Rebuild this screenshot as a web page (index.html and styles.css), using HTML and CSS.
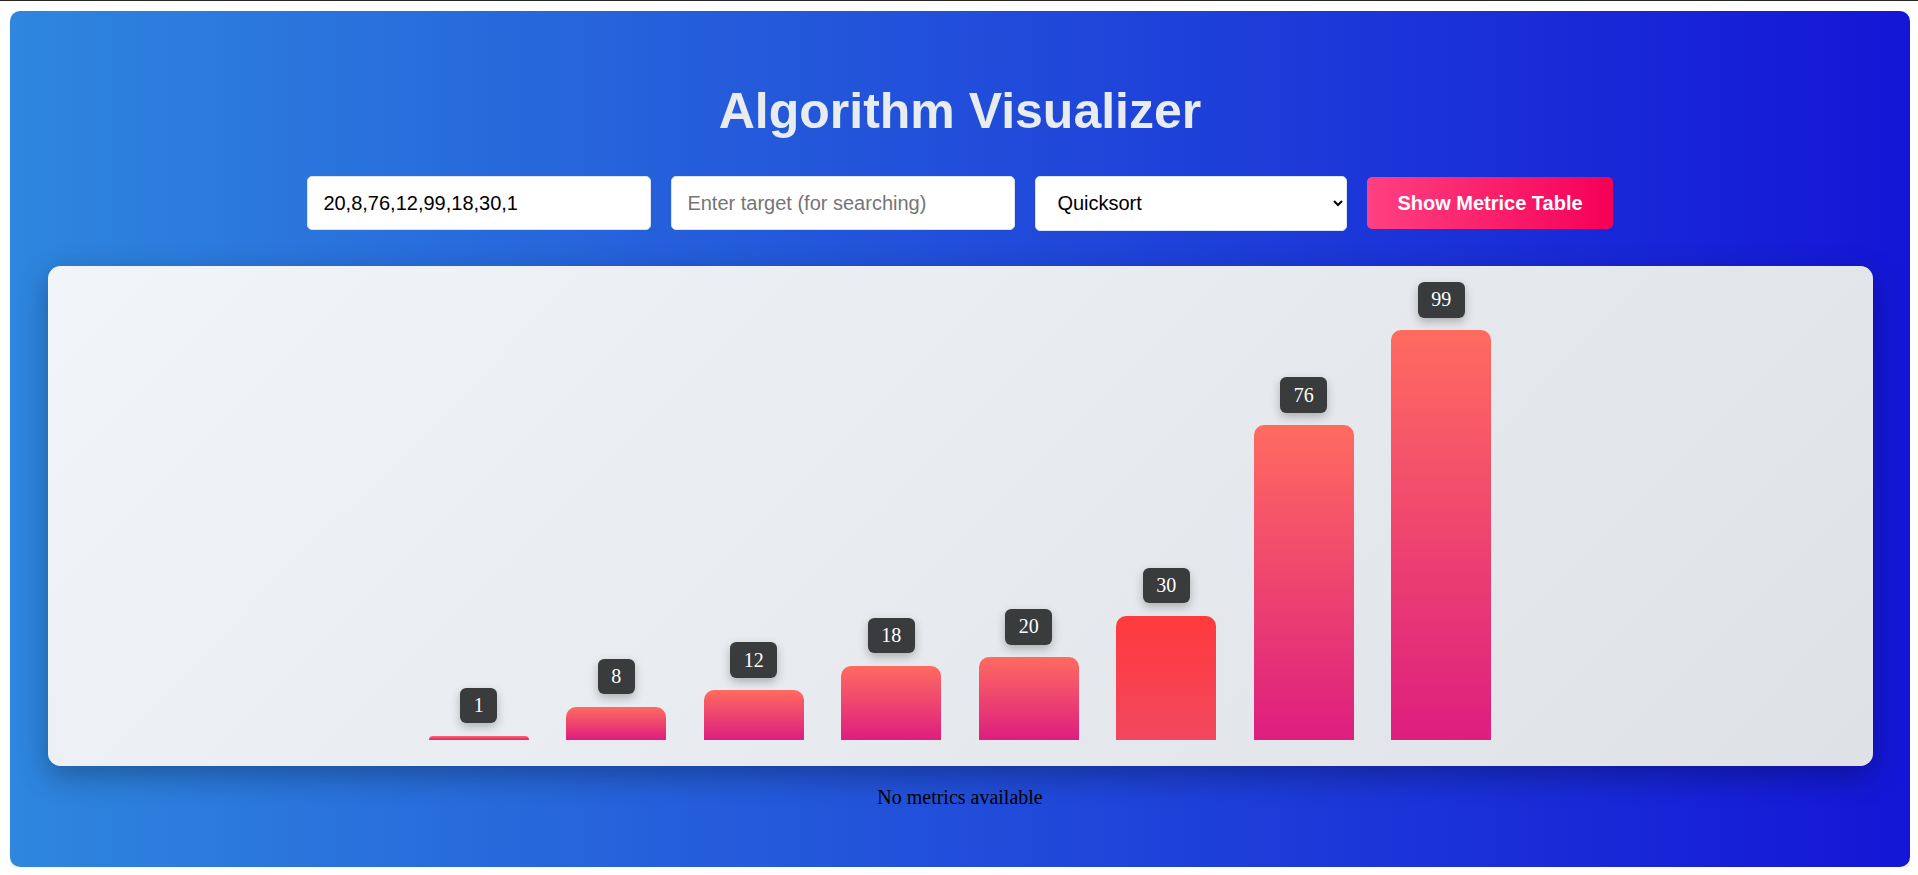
FILE: index.html
```html
<!DOCTYPE html>
<html lang="en">
<head>
<meta charset="utf-8">
<title>Algorithm Visualizer</title>
<link rel="stylesheet" href="styles.css">
</head>
<body>
<div class="app">
  <h1 class="title">Algorithm Visualizer</h1>
  <div class="controls">
    <input class="field" type="text" value="20,8,76,12,99,18,30,1">
    <input class="field" type="text" placeholder="Enter target (for searching)">
    <select class="algo">
      <option>Quicksort</option>
      <option>Bubble Sort</option>
      <option>Merge Sort</option>
      <option>Binary Search</option>
    </select>
    <button class="btn">Show Metrice Table</button>
  </div>
  <div class="chart">
    <div class="col"><span class="label">1</span><div class="bar" style="height:4.14px"></div></div>
    <div class="col"><span class="label">8</span><div class="bar" style="height:33.1px"></div></div>
    <div class="col"><span class="label">12</span><div class="bar" style="height:49.7px"></div></div>
    <div class="col"><span class="label">18</span><div class="bar" style="height:74.5px"></div></div>
    <div class="col"><span class="label">20</span><div class="bar" style="height:82.8px"></div></div>
    <div class="col"><span class="label">30</span><div class="bar bar-active" style="height:124.2px"></div></div>
    <div class="col"><span class="label">76</span><div class="bar" style="height:314.6px"></div></div>
    <div class="col"><span class="label">99</span><div class="bar" style="height:409.9px"></div></div>
  </div>
  <div class="metrics">No metrics available</div>
</div>
</body>
</html>
```

FILE: styles.css
```css
html {
  border-top: 1px solid #262626;
  background: #ffffff;
}
body {
  margin: 10px 8px 8px 10px;
  font-family: "Liberation Serif", "Times New Roman", serif;
}
.app {
  box-sizing: border-box;
  width: 1900px;
  height: 856px;
  padding: 37.5px 37.5px 0;
  border-radius: 10px;
  background: linear-gradient(to right, #2e86de, #1416d6);
  box-shadow: 0 5px 15px rgba(0, 0, 0, 0.12);
}
.title {
  margin: 34.5px 0 35px;
  text-align: center;
  font-family: "Liberation Sans", Arial, sans-serif;
  font-weight: bold;
  font-size: 50px;
  line-height: 57.5px;
  color: #e9ecef;
}
.controls {
  display: flex;
  justify-content: center;
  align-items: center;
  gap: 20px;
  height: 55px;
}
.field {
  box-sizing: border-box;
  width: 344px;
  height: 54px;
  padding: 0 15px;
  border: 1px solid #dde3ea;
  border-radius: 5px;
  background: #ffffff;
  font-family: "Liberation Sans", Arial, sans-serif;
  font-size: 20px;
  color: #000000;
  outline: none;
}
.field::placeholder {
  color: #757575;
}
.algo {
  box-sizing: border-box;
  width: 312px;
  height: 55px;
  padding: 0 12px 0 17px;
  border: 1px solid #dde3ea;
  border-radius: 5px;
  background: #ffffff;
  font-family: "Liberation Sans", Arial, sans-serif;
  font-size: 20px;
  color: #000000;
}
.btn {
  box-sizing: border-box;
  height: 52px;
  padding: 0 30px;
  border: none;
  border-radius: 5px;
  background: linear-gradient(to right, #ff4081, #f50057);
  font-family: "Liberation Sans", Arial, sans-serif;
  font-weight: bold;
  font-size: 20px;
  color: #ffffff;
}
.chart {
  box-sizing: border-box;
  height: 500px;
  margin-top: 35.5px;
  padding-bottom: 26px;
  display: flex;
  justify-content: center;
  align-items: flex-end;
  gap: 37.5px;
  border-radius: 12.5px;
  background: linear-gradient(135deg, #f1f4f8, #dee2e6);
  box-shadow: 0 10px 30px rgba(0, 0, 0, 0.3);
}
.col {
  width: 100px;
  display: flex;
  flex-direction: column;
  align-items: center;
  gap: 12.5px;
}
.label {
  padding: 6.25px 13.5px;
  border-radius: 6.25px;
  background: #3a3b3c;
  color: #ffffff;
  font-family: "Liberation Serif", "Times New Roman", serif;
  font-size: 20px;
  line-height: 23px;
  box-shadow: 0 4px 10px rgba(0, 0, 0, 0.25);
}
.bar {
  width: 100px;
  border-radius: 10px 10px 0 0;
  background: linear-gradient(to bottom, #ff6b60, #dd1e7f);
}
.bar-active {
  background: linear-gradient(to bottom, #ff3a3d, #f2475f);
}
.metrics {
  margin-top: 20px;
  text-align: center;
  font-size: 20px;
  line-height: 23px;
  color: #000000;
}
```
